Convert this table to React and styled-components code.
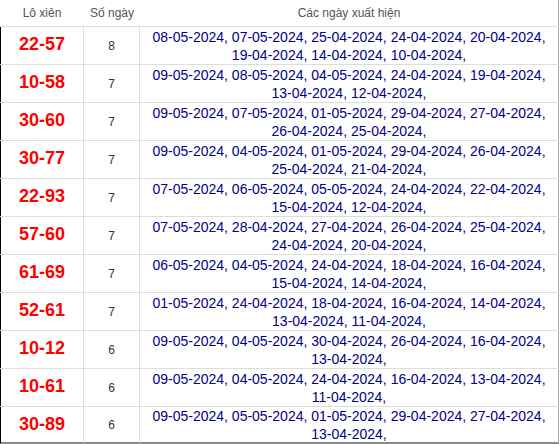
import * as React from 'react';
import styled, { createGlobalStyle } from 'styled-components';

const GlobalStyle = createGlobalStyle`
  html, body {
    margin: 0;
    padding: 0;
    background: #fff;
  }
  body {
    font-family: "Liberation Sans", Arial, sans-serif;
  }
`;

const rows = [
  ['22-57', 8, '08-05-2024, 07-05-2024, 25-04-2024, 24-04-2024, 20-04-2024, 19-04-2024, 14-04-2024, 10-04-2024,'],
  ['10-58', 7, '09-05-2024, 08-05-2024, 04-05-2024, 24-04-2024, 19-04-2024, 13-04-2024, 12-04-2024,'],
  ['30-60', 7, '09-05-2024, 07-05-2024, 01-05-2024, 29-04-2024, 27-04-2024, 26-04-2024, 25-04-2024,'],
  ['30-77', 7, '09-05-2024, 04-05-2024, 01-05-2024, 29-04-2024, 26-04-2024, 25-04-2024, 21-04-2024,'],
  ['22-93', 7, '07-05-2024, 06-05-2024, 05-05-2024, 24-04-2024, 22-04-2024, 15-04-2024, 12-04-2024,'],
  ['57-60', 7, '07-05-2024, 28-04-2024, 27-04-2024, 26-04-2024, 25-04-2024, 24-04-2024, 20-04-2024,'],
  ['61-69', 7, '06-05-2024, 04-05-2024, 24-04-2024, 18-04-2024, 16-04-2024, 15-04-2024, 14-04-2024,'],
  ['52-61', 7, '01-05-2024, 24-04-2024, 18-04-2024, 16-04-2024, 14-04-2024, 13-04-2024, 11-04-2024,'],
  ['10-12', 6, '09-05-2024, 04-05-2024, 30-04-2024, 26-04-2024, 16-04-2024, 13-04-2024,'],
  ['10-61', 6, '09-05-2024, 04-05-2024, 24-04-2024, 16-04-2024, 13-04-2024, 11-04-2024,'],
  ['30-89', 6, '09-05-2024, 05-05-2024, 01-05-2024, 29-04-2024, 27-04-2024, 13-04-2024,'],
];

const Table = styled.div`
  width: 559px;
  display: flex;
  flex-direction: column;
`;

const Row = styled.div`
  display: grid;
  grid-template-columns: 84px 56px 419px;
  height: 38px;
  box-sizing: border-box;
  border-bottom: 1px solid #ddd;

  &:last-child {
    height: 37px;
    border-bottom: 2px solid #888;
  }
`;

const HeadRow = styled(Row)`
  height: 27px;
`;

const HeadCell = styled.div`
  display: flex;
  align-items: center;
  justify-content: center;
  font-size: 12px;
  color: #555;
  box-sizing: border-box;
  border-right: ${p => (p.$last ? '1px solid #aaa' : 'none')};
  padding-bottom: 1px;
`;

const Cell = styled.div`
  display: flex;
  align-items: center;
  justify-content: center;
  box-sizing: border-box;
  border-right: 1px solid ${p => (p.$last ? '#aaa' : '#ddd')};
  border-left: ${p => (p.$first ? '1px solid #000' : 'none')};
`;

const Pair = styled.span`
  color: #f00;
  font-size: 18px;
  font-weight: bold;
  padding-bottom: 2px;
`;

const Count = styled.span`
  color: #333;
  font-size: 12px;
`;

const Dates = styled.span`
  color: #00008b;
  font-size: 14px;
  line-height: 18px;
  text-align: center;
  padding: 0 2px;
`;

export default function App() {
  return (
    <>
      <GlobalStyle />
      <Table>
        <HeadRow>
          <HeadCell>Lô xiên</HeadCell>
          <HeadCell>Số ngày</HeadCell>
          <HeadCell $last>Các ngày xuất hiện</HeadCell>
        </HeadRow>
        {rows.map(([pair, count, dates]) => (
          <Row key={pair}>
            <Cell $first>
              <Pair>{pair}</Pair>
            </Cell>
            <Cell>
              <Count>{count}</Count>
            </Cell>
            <Cell $last>
              <Dates>{dates}</Dates>
            </Cell>
          </Row>
        ))}
      </Table>
    </>
  );
}
